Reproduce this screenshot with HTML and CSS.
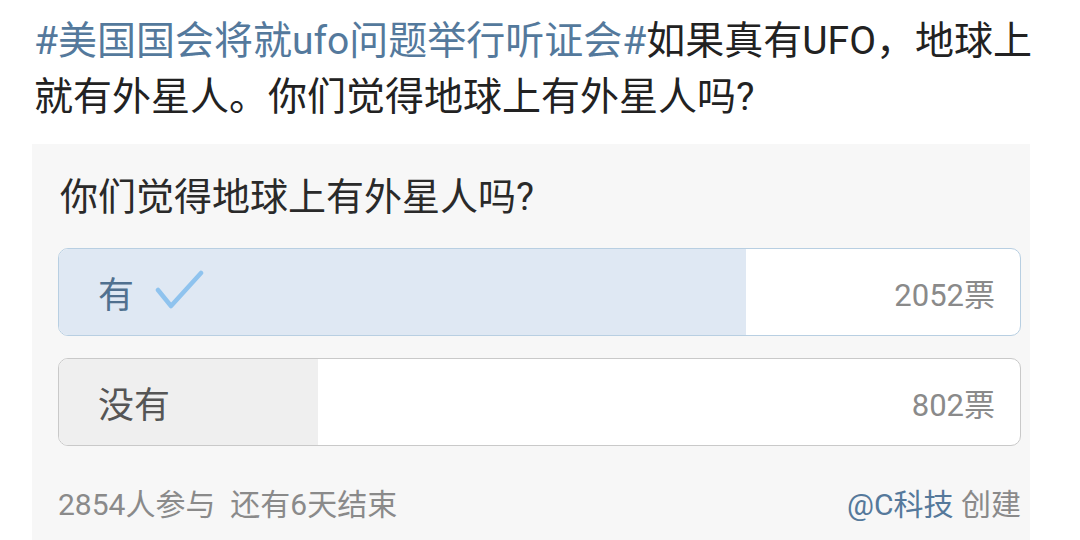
FILE: index.html
```html
<html>
<head>
<title>投票</title>
<meta charset="utf-8">
<meta name="viewport" content="width=device-width,initial-scale=1">
<link rel="stylesheet" href="styles.css">
</head>
<body>
<div class="post">
<p class="text"><span class="tag">#美国国会将就ufo问题举行听证会#</span>如果真有UFO，地球上就有外星人。你们觉得地球上有外星人吗?</p>
<div class="poll">
<h3>你们觉得地球上有外星人吗?</h3>
<div class="option voted">
<div class="fill" style="width: 71.5%"></div>
<span class="label">有<svg class="check" width="50" height="40" viewBox="0 0 50 40"><path d="M3 20 L16 36 L46 3" fill="none" stroke="#8fc3ee" stroke-width="4.5" stroke-linecap="round" stroke-linejoin="round"/></svg></span>
<span class="count">2052票</span>
</div>
<div class="option">
<div class="fill" style="width: 27%"></div>
<span class="label">没有</span>
<span class="count">802票</span>
</div>
<div class="meta">
<span>2854人参与&nbsp;&nbsp;还有6天结束</span>
<span><a class="user">@C科技</a> 创建</span>
</div>
</div>
</div>
</body>
</html>
```

FILE: styles.css
```css
:root{--tag: #54799c; --gray: #8a8a8a;}
body{margin: 0;background-color: #fff;font-family: Roboto, "Noto Sans CJK SC", sans-serif;color: #222;}
.post{padding-top: 13px;}
.text{margin: 0;padding: 0 30px 0 34px;font-size: 39px;line-height: 56px;}
.tag{color: var(--tag);}
.poll{margin: 19px 50px 0 32px;padding: 20px 9px 20px 26px;background-color: #f7f7f7;}
.poll h3{margin: 0 0 18px 2px;font-weight: normal;font-size: 38px;line-height: 66px;color: #2a2a2a;}
.option{position: relative;display: flex;align-items: center;justify-content: space-between;height: 86px;margin-bottom: 22px;border: 1px solid #c9c9c9;border-radius: 10px;background-color: #fff;overflow: hidden;}
.option.voted{border-color: #b8cfe2;}
.fill{position: absolute;left: 0;top: 0;bottom: 0;background-color: #efefef;}
.voted .fill{background-color: #dfe8f3;}
.label{position: relative;display: flex;align-items: center;padding-left: 39px;font-size: 36px;color: #555;}
.voted .label{color: #50708f;}
.check{margin-left: 21px;margin-top: -4px;}
.count{position: relative;padding-right: 25px;font-size: 31px;color: var(--gray);}
.meta{display: flex;justify-content: space-between;padding: 12px 0 8px 0;font-size: 30px;color: var(--gray);}
.user{color: #55799b;}
```
